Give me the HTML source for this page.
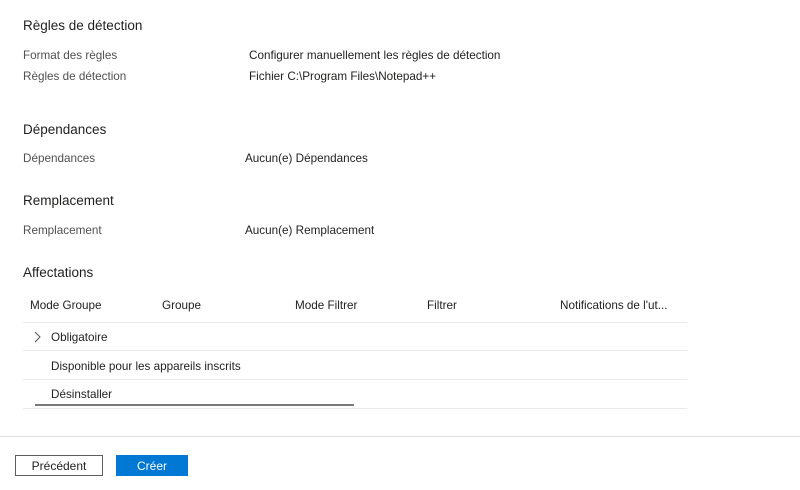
<!DOCTYPE html>
<html><head><meta charset="utf-8"><style>
body{margin:0;width:800px;height:490px;background:#fff;font-family:"Liberation Sans",Arial,sans-serif;position:relative;overflow:hidden;color:#323130}
.a{position:absolute;white-space:nowrap;line-height:16px}
.h{font-size:13.5px;color:#201f1e}
.l{font-size:11.7px;color:#505050}
.v{font-size:11.7px;color:#201f1e}
.line{position:absolute;left:23px;width:664px;height:1px;background:#edebe9}
</style></head><body>
<div class="a h" style="left:23px;top:18px">Règles de détection</div>
<div class="a l" style="left:23px;top:48px">Format des règles</div>
<div class="a v" style="left:249px;top:48px">Configurer manuellement les règles de détection</div>
<div class="a l" style="left:23px;top:69px">Règles de détection</div>
<div class="a v" style="left:249px;top:69px">Fichier C:\Program Files\Notepad++</div>

<div class="a h" style="left:23px;top:122px">Dépendances</div>
<div class="a l" style="left:23px;top:151px">Dépendances</div>
<div class="a v" style="left:245px;top:151px">Aucun(e) Dépendances</div>

<div class="a h" style="left:23px;top:193px">Remplacement</div>
<div class="a l" style="left:23px;top:223px">Remplacement</div>
<div class="a v" style="left:245px;top:223px">Aucun(e) Remplacement</div>

<div class="a h" style="left:23px;top:265px">Affectations</div>
<div class="a v" style="left:30px;top:298px">Mode Groupe</div>
<div class="a v" style="left:162px;top:298px">Groupe</div>
<div class="a v" style="left:295px;top:298px">Mode Filtrer</div>
<div class="a v" style="left:427px;top:298px">Filtrer</div>
<div class="a v" style="left:560px;top:298px">Notifications de l'ut...</div>
<div class="line" style="top:322px"></div>
<svg class="a" style="left:33px;top:331px" width="8" height="12"><path d="M2 1l5 5-5 5" fill="none" stroke="#555" stroke-width="1"/></svg>
<div class="a v" style="left:51px;top:330px">Obligatoire</div>
<div class="line" style="top:350px"></div>
<div class="a v" style="left:51px;top:359px">Disponible pour les appareils inscrits</div>
<div class="line" style="top:379px"></div>
<div class="a v" style="left:51px;top:387px">Désinstaller</div>
<div style="position:absolute;left:35px;top:404px;width:319px;height:2px;background:#7a7a7a"></div>
<div class="line" style="top:408px"></div>

<div style="position:absolute;left:0;top:436px;width:800px;height:1px;background:#e1dfdd"></div>
<div style="position:absolute;left:15px;top:455px;width:86px;height:19px;border:1px solid #605e5c;font-size:12px;text-align:center;line-height:20px;color:#201f1e">Précédent</div>
<div style="position:absolute;left:116px;top:455px;width:72px;height:21px;background:#0078d4;color:#fff;font-size:12px;text-align:center;line-height:22px">Créer</div>
</body></html>
